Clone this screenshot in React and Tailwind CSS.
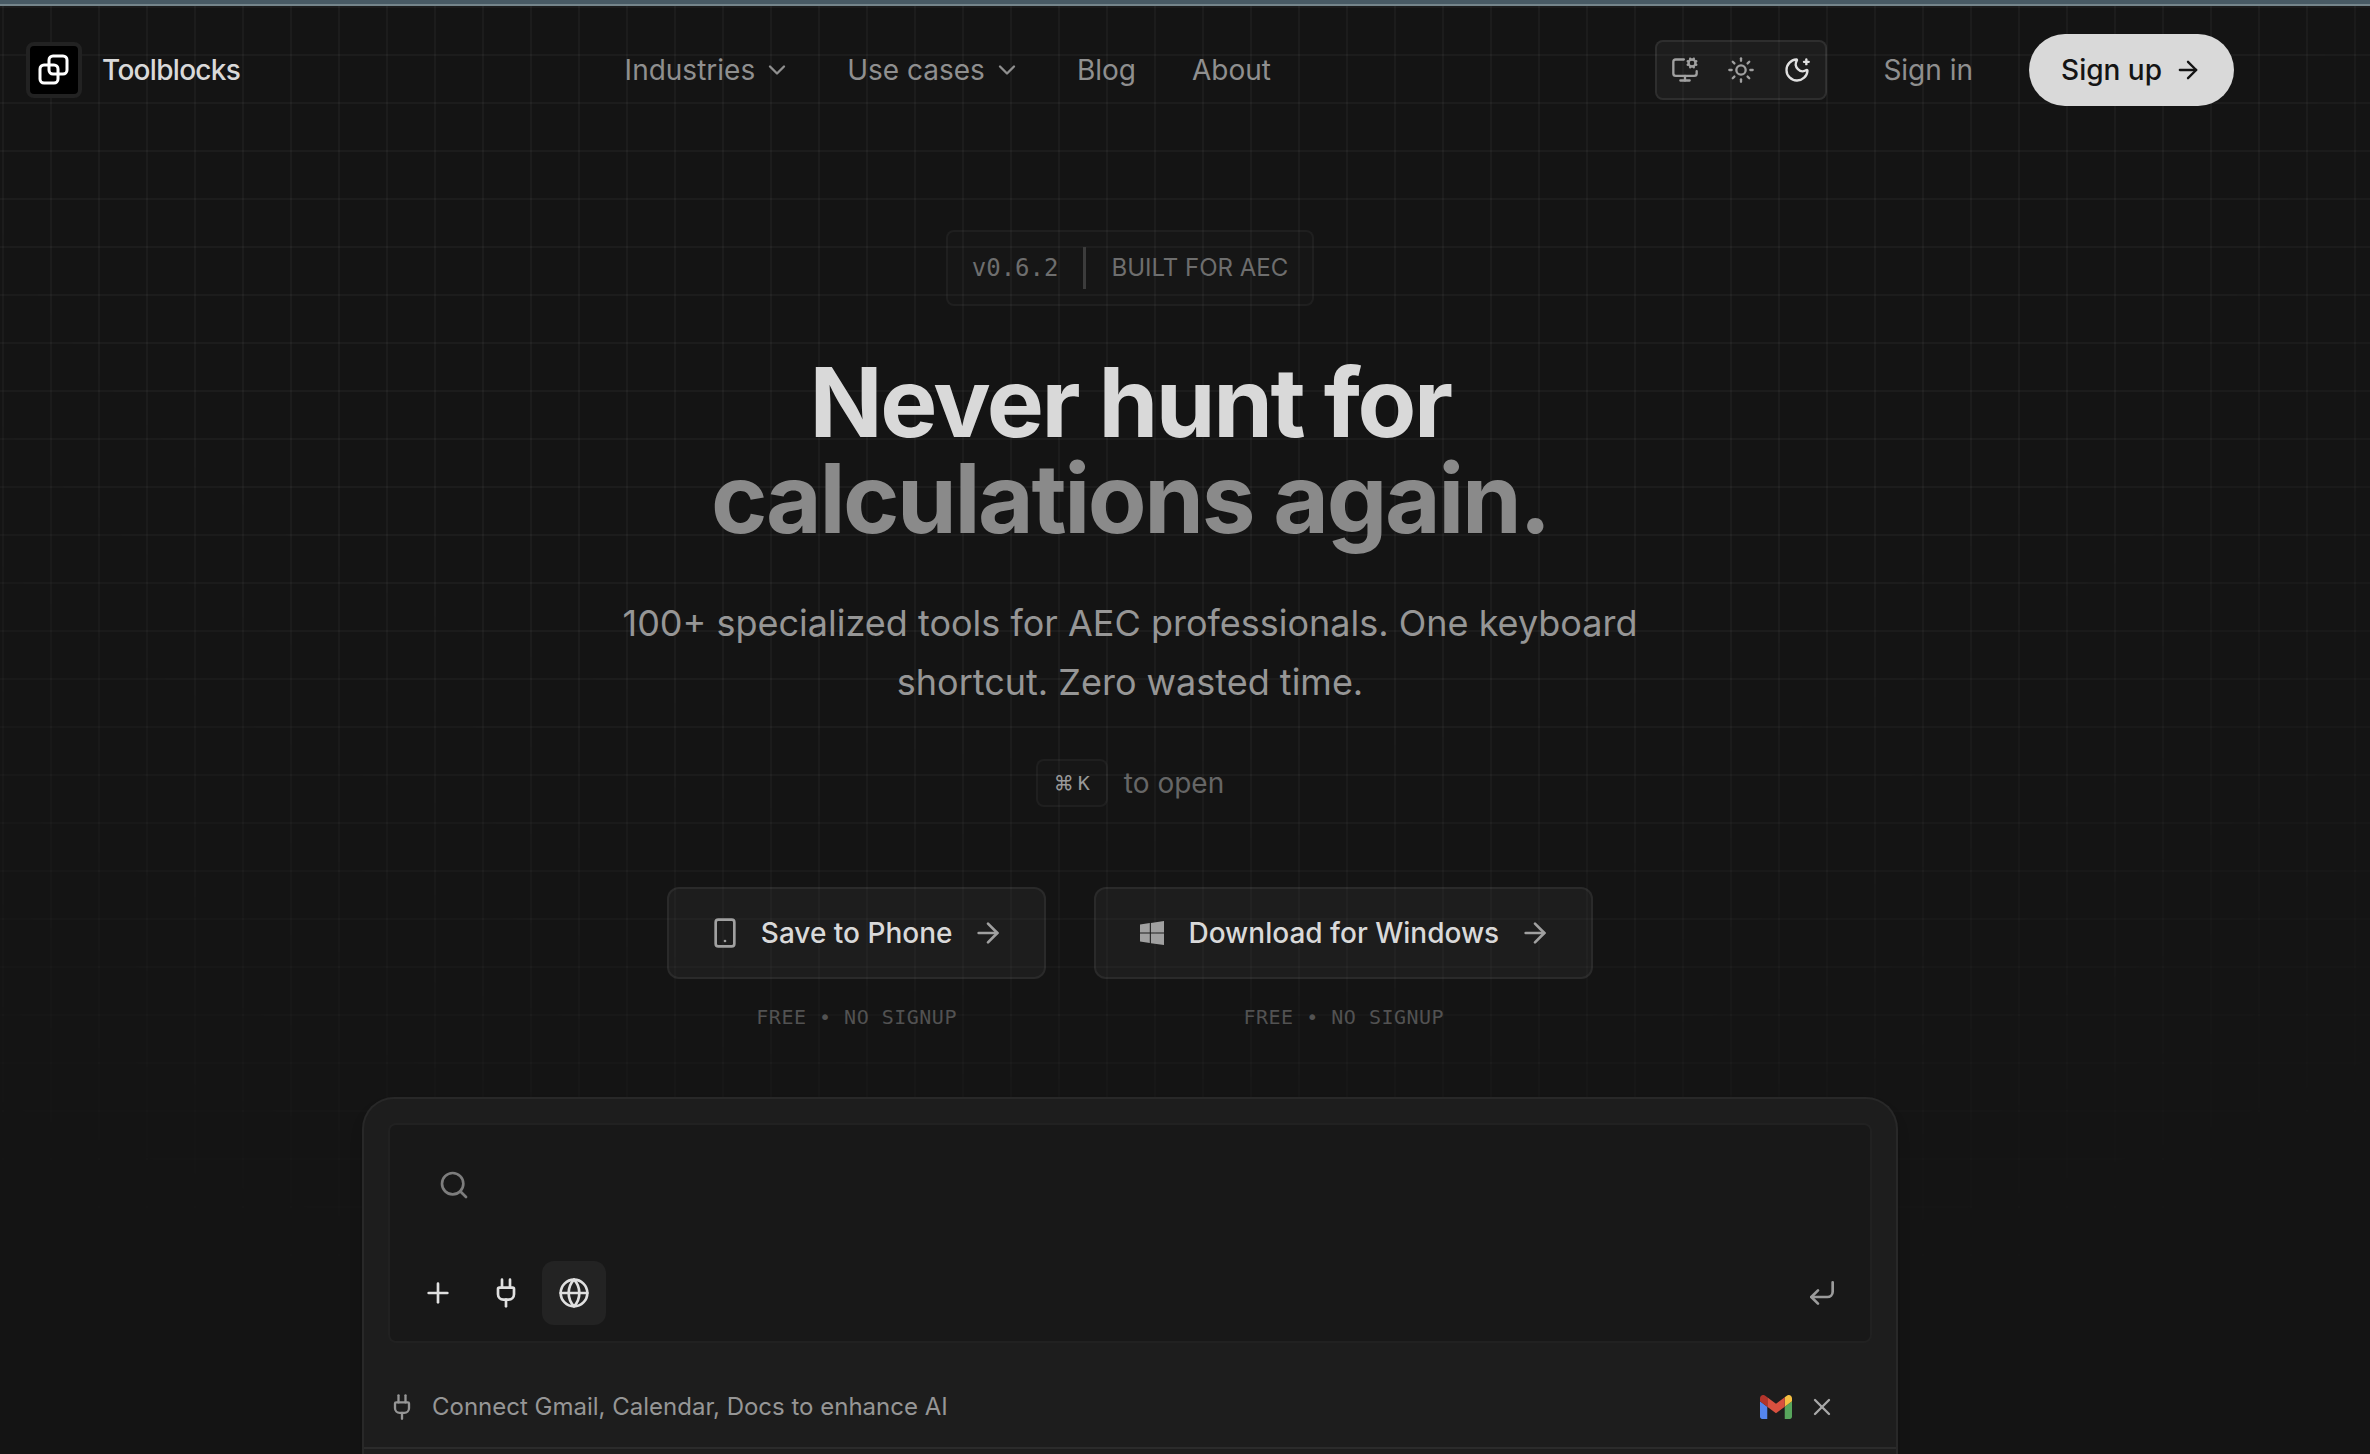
import { useState } from "react";
import {
  ArrowRight,
  ChevronDown,
  CornerDownLeft,
  Globe,
  MonitorCog,
  MoonStar,
  Plug,
  Plus,
  Search,
  Smartphone,
  Sun,
  X,
} from "lucide-react";

const navLinks = [
  { label: "Industries", menu: true },
  { label: "Use cases", menu: true },
  { label: "Blog" },
  { label: "About" },
];

const themes = [
  { id: "system", Icon: MonitorCog },
  { id: "light", Icon: Sun },
  { id: "dark", Icon: MoonStar },
];

const WindowsLogo = () => (
  <svg viewBox="-4 -4 32 32" className="size-8" fill="currentColor" aria-hidden="true">
    <path d="M0 3.4 9.8 2.1v9.4H0zM10.9 1.9 24 0v11.4H10.9zM0 12.6h9.8V22L0 20.6zM10.9 12.6H24V24l-13.1-1.8z" />
  </svg>
);

const GmailLogo = () => (
  <svg viewBox="52 42 88 66" className="h-6 w-8" role="img" aria-label="Gmail">
    <path fill="#5485ed" d="M58 108h14V74L52 59v43c0 3.32 2.69 6 6 6" />
    <path fill="#57a55c" d="M120 108h14c3.32 0 6-2.69 6-6V59l-20 15" />
    <path fill="#f5bf42" d="M120 48v26l20-15v-8c0-7.42-8.47-11.65-14.4-7.2" />
    <path fill="#d8503f" d="M72 74V48l24 18 24-18v26L96 92" />
    <path fill="#b3342b" d="M52 51v8l20 15V48l-5.6-4.2c-5.94-4.45-14.4-.22-14.4 7.2" />
  </svg>
);

const Header = () => {
  const [theme, setTheme] = useState("dark");

  return (
    <header className="flex h-32 items-center justify-between px-[26px] text-[28px] text-[#8f8f8f]">
      <a href="#" className="flex items-center gap-5 font-medium tracking-tight text-[#d9d9d9]">
        <span className="flex size-14 items-center justify-center rounded-lg border-4 border-[#222222] bg-black text-white">
          <svg viewBox="0 0 32 32" className="size-8" fill="none" stroke="currentColor" strokeWidth="3">
            <rect x="11" y="2" width="18" height="18" rx="4" />
            <rect x="2" y="11" width="18" height="18" rx="4" />
          </svg>
        </span>
        Toolblocks
      </a>

      <nav className="flex items-center gap-14">
        {navLinks.map(({ label, menu }) =>
          menu ? (
            <button key={label} className="flex items-center gap-2">
              {label}
              <ChevronDown className="size-7" />
            </button>
          ) : (
            <a key={label} href="#">{label}</a>
          )
        )}
      </nav>

      <div className="flex items-center gap-14">
        <div className="flex h-[60px] items-center rounded-lg border-2 border-white/8 bg-white/4">
          {themes.map(({ id, Icon }) => (
            <button
              key={id}
              aria-label={`${id} theme`}
              onClick={() => setTheme(id)}
              className={`flex w-14 justify-center ${theme === id ? "text-[#e0e0e0]" : "text-[#a0a0a0]"}`}
            >
              <Icon className="size-7" />
            </button>
          ))}
        </div>
        <a href="#">Sign in</a>
        <a href="#" className="flex h-[72px] items-center gap-3 rounded-full bg-[#d9d9d9] px-8 font-medium text-[#141414]">
          Sign up
          <ArrowRight className="size-7" />
        </a>
      </div>
    </header>
  );
};

const DownloadButton = ({ icon, label }) => (
  <div className="flex flex-col items-center gap-[22px]">
    <button className="flex h-[92px] items-center gap-5 rounded-xl border-2 border-white/6 bg-white/4 px-10 text-[28px] font-medium text-[#d9d9d9]">
      <span className="text-[#a0a0a0]">{icon}</span>
      {label}
      <ArrowRight className="size-8 text-[#a0a0a0]" />
    </button>
    <p className="font-['DejaVu_Sans_Mono',monospace] text-[20px] leading-8 tracking-wide text-[#525252]">
      FREE • NO SIGNUP
    </p>
  </div>
);

const Hero = () => (
  <section className="flex flex-col items-center pt-24 text-center">
    <div className="flex h-[76px] items-center gap-[25px] rounded-lg border-2 border-white/4 bg-white/1 px-6 text-[24px] text-[#6e6e6e]">
      <span className="font-['DejaVu_Sans_Mono',monospace]">v0.6.2</span>
      <span className="h-[42px] w-[3px] bg-[#3c3c3c]" />
      <span>BUILT FOR AEC</span>
    </div>

    <h1 className="mt-12 text-[96px] leading-[96px] font-bold tracking-tight text-[#d9d9d9]">
      Never hunt for
      <span className="block text-[#8a8a8a]">calculations again.</span>
    </h1>

    <p className="mt-12 max-w-[1100px] text-[36px] leading-[59px] text-[#969696]">
      100+ specialized tools for AEC professionals. One keyboard shortcut. Zero wasted time.
    </p>

    <div className="mt-[47px] flex items-center gap-4 text-[28px] text-[#666666]">
      <kbd className="flex h-12 items-center gap-1 rounded-lg border-2 border-white/4 bg-white/1 px-4 font-['DejaVu_Sans_Mono',monospace] text-[20px] text-[#999999]">
        <span className="font-['Inter',sans-serif]">⌘</span>K
      </kbd>
      to open
    </div>

    <div className="mt-20 flex gap-12">
      <DownloadButton icon={<Smartphone className="size-8" />} label="Save to Phone" />
      <DownloadButton icon={<WindowsLogo />} label="Download for Windows" />
    </div>
  </section>
);

const SearchPanel = () => {
  const [query, setQuery] = useState("");
  const [web, setWeb] = useState(true);

  return (
    <section className="mx-auto mt-16 w-full max-w-[1536px] rounded-t-[32px] border-2 border-b-0 border-[#282828] bg-[#1d1d1d] shadow-lg shadow-black/20">
      <div className="p-6">
        <div className="rounded-lg border-2 border-[#212121] bg-[#181818]">
          <label className="flex h-[120px] items-center gap-4 px-12 text-[#7d7d7d]">
            <Search className="size-8" />
            <input
              aria-label="Search tools"
              value={query}
              onChange={(e) => setQuery(e.target.value)}
              className="flex-1 bg-transparent text-[28px] text-[#d9d9d9] outline-none"
            />
          </label>
          <div className="flex items-center gap-1 p-4 text-[#e0e0e0]">
            <button aria-label="Add" className="flex size-16 items-center justify-center">
              <Plus className="size-8" />
            </button>
            <button aria-label="Connectors" className="flex size-16 items-center justify-center">
              <Plug className="size-8" />
            </button>
            <button
              aria-label="Web search"
              onClick={() => setWeb(!web)}
              className={`flex size-16 items-center justify-center rounded-xl ${web ? "bg-[#232323]" : ""}`}
            >
              <Globe className="size-8" />
            </button>
            <button aria-label="Submit" className="ml-auto flex size-16 items-center justify-center text-[#9b9b9b]">
              <CornerDownLeft className="size-8" />
            </button>
          </div>
        </div>
      </div>

      <div className="flex h-[82px] items-center gap-4 border-b-2 border-[#2b2b2b] pr-[58px] pl-6 text-[24px] text-[#969696]">
        <Plug className="size-7" />
        <p>Connect Gmail, Calendar, Docs to enhance AI</p>
        <div className="ml-auto flex items-center gap-[14px]">
          <GmailLogo />
          <button aria-label="Dismiss" className="flex size-8 items-center justify-center text-[#a8a8a8]">
            <X className="size-7" />
          </button>
        </div>
      </div>
      <div className="h-16" />
    </section>
  );
};

const App = () => (
  <div className="h-screen overflow-hidden bg-[#141414] font-['Inter',sans-serif]">
    <div className="h-[6px] border-b-2 border-[#75858b] bg-[#485a64]" />
    <div className="relative">
      {/* Faded grid backdrop */}
      <div className="pointer-events-none absolute inset-0 bg-[linear-gradient(to_right,rgba(255,255,255,0.035)_2px,transparent_2px),linear-gradient(to_bottom,rgba(255,255,255,0.035)_2px,transparent_2px)] bg-[size:48px_48px] bg-[position:2px_0] mask-[radial-gradient(ellipse_95%_95%_at_48%_0%,#000_50%,transparent_100%)]" />
      <main className="relative pr-[110px]">
        <Header />
        <Hero />
        <SearchPanel />
      </main>
    </div>
  </div>
);

export default App;
